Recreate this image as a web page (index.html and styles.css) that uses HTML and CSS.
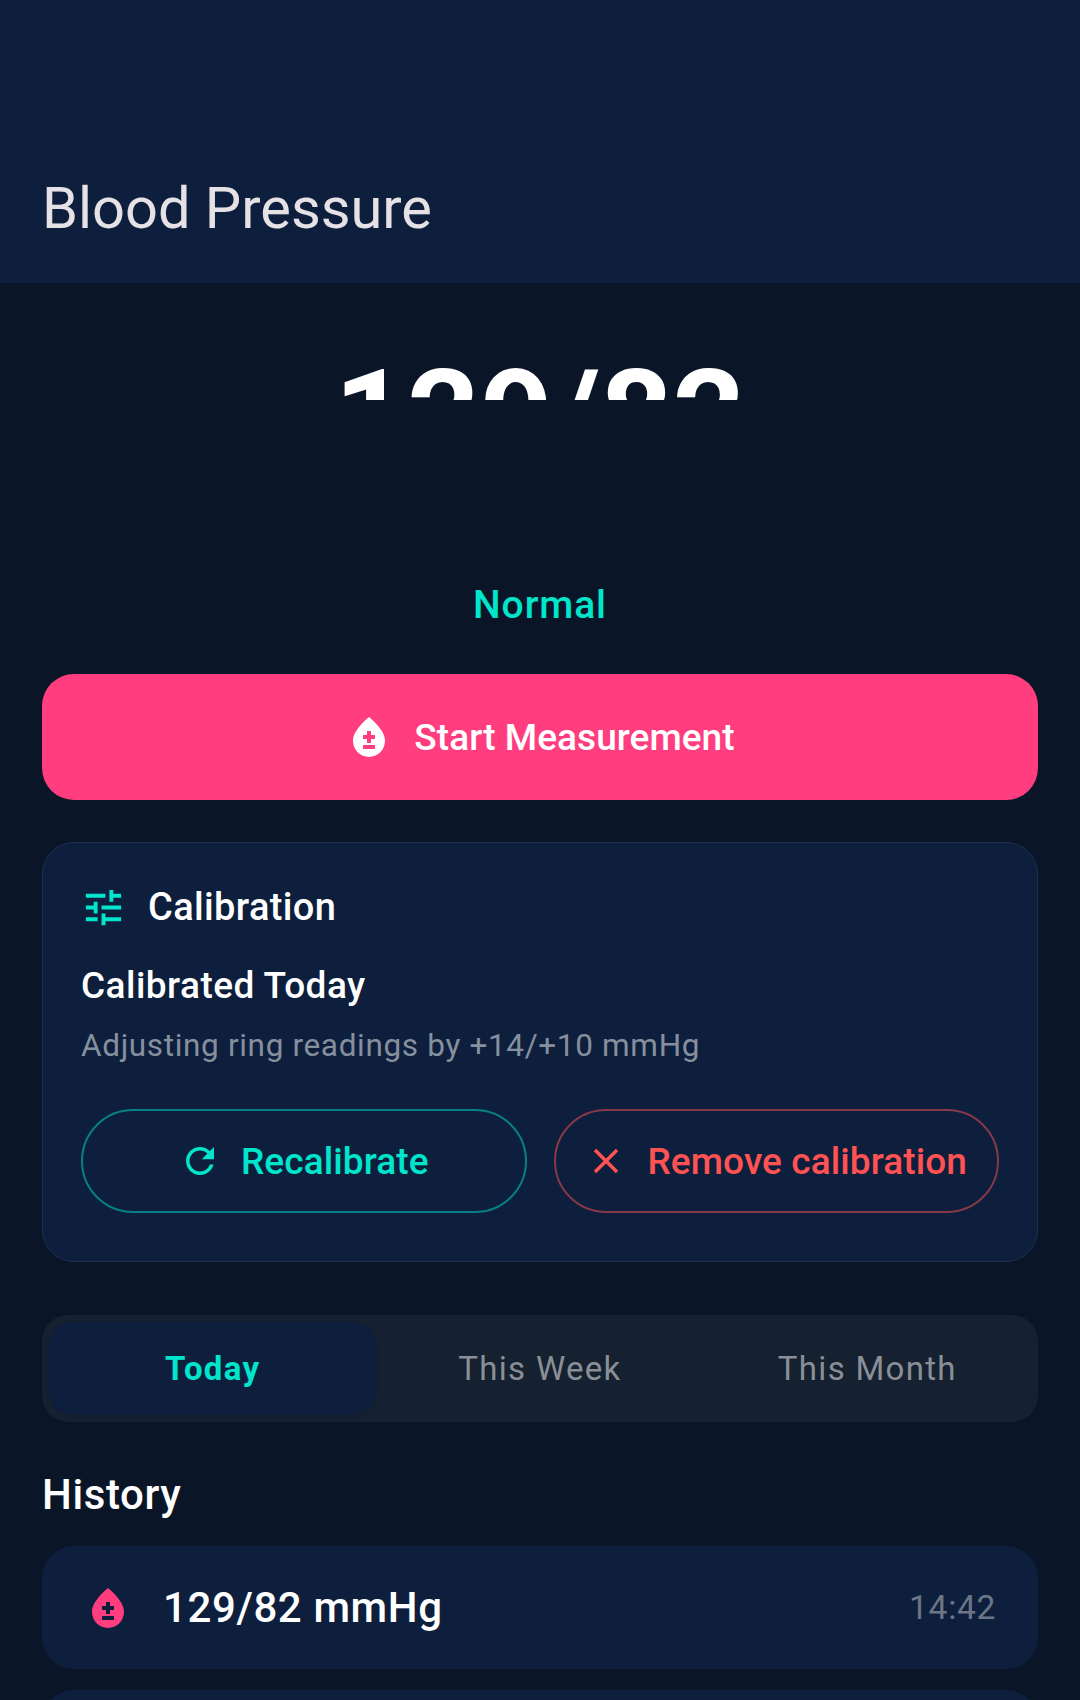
FILE: index.html
```html
<!DOCTYPE html>
<html lang="en">

<head>
    <title>Blood Pressure</title>
    <link rel="stylesheet" href="styles.css">
</head>

<body>
    <div class="screen">
        <header class="app-bar">
            <h1>Blood Pressure</h1>
        </header>

        <main class="content">
            <div class="reading">
                <div class="reading-clip"><span>129/82</span></div>
                <div class="status">Normal</div>
            </div>

            <button class="start-btn">
                <svg class="icon-start" viewBox="0 0 24 24"><path d="M12 2C6.67 6.55 4 10.48 4 13.8 4 18.78 7.8 22 12 22s8-3.22 8-8.2C20 10.48 17.33 6.55 12 2zm3 16H9v-2h6v2zm0-5h-2v2h-2v-2H9v-2h2V9h2v2h2v2z"/></svg>
                <span>Start Measurement</span>
            </button>

            <section class="calibration">
                <div class="cal-head">
                    <svg class="icon-tune" viewBox="0 0 24 24"><path d="M3 17v2h6v-2H3zM3 5v2h10V5H3zm10 16v-2h8v-2h-8v-2h-2v6h2zM7 9v2H3v2h4v2h2V9H7zm14 4v-2H11v2h10zm-6-4h2V7h4V5h-4V3h-2v6z"/></svg>
                    <h2>Calibration</h2>
                </div>
                <div class="cal-title">Calibrated Today</div>
                <div class="cal-note">Adjusting ring readings by +14/+10 mmHg</div>
                <div class="cal-actions">
                    <button class="pill pill-teal">
                        <svg viewBox="0 0 24 24"><path d="M17.65 6.35C16.2 4.9 14.21 4 12 4c-4.42 0-7.99 3.58-7.99 8s3.57 8 7.99 8c3.73 0 6.84-2.55 7.73-6h-2.08c-.82 2.33-3.04 4-5.65 4-3.31 0-6-2.69-6-6s2.69-6 6-6c1.66 0 3.14.69 4.22 1.78L13 11h7V4l-2.35 2.35z"/></svg>
                        <span>Recalibrate</span>
                    </button>
                    <button class="pill pill-red">
                        <svg viewBox="0 0 24 24"><path d="M19 6.41L17.59 5 12 10.59 6.41 5 5 6.41 10.59 12 5 17.59 6.41 19 12 13.41 17.59 19 19 17.59 13.41 12z"/></svg>
                        <span>Remove calibration</span>
                    </button>
                </div>
            </section>

            <div class="tabs">
                <div class="tab active">Today</div>
                <div class="tab">This Week</div>
                <div class="tab">This Month</div>
            </div>

            <h2 class="history-title">History</h2>

            <div class="history-row">
                <svg class="icon-drop" viewBox="0 0 24 24"><path d="M12 2C6.67 6.55 4 10.48 4 13.8 4 18.78 7.8 22 12 22s8-3.22 8-8.2C20 10.48 17.33 6.55 12 2zm3 16H9v-2h6v2zm0-5h-2v2h-2v-2H9v-2h2V9h2v2h2v2z"/></svg>
                <span class="history-value">129/82 mmHg</span>
                <span class="history-time">14:42</span>
            </div>
            <div class="history-row"></div>
        </main>
    </div>
</body>

</html>
```

FILE: styles.css
```css
* {
    box-sizing: border-box;
}

body {
    margin: 0;
    background-color: #0a1628;
    font-family: Roboto, "Liberation Sans", sans-serif;
    color: #ffffff;
}

.screen {
    height: 1700px;
    overflow: hidden;
}

/* top bar */
.app-bar {
    height: 283px;
    background-color: #0d1f3c;
    padding: 0 42px;
    display: flex;
    align-items: flex-end;
}

.app-bar h1 {
    margin: 0 0 37px;
    font-size: 57.75px;
    line-height: 76px;
    font-weight: 400;
    color: #e6e1e5;
}

.content {
    padding: 0 42px;
}

/* big number, the box cuts it off like the app does */
.reading {
    text-align: center;
}

.reading-clip {
    height: 58px;
    margin-top: 59px;
    overflow: hidden;
    font-size: 127px;
    line-height: 148px;
    font-weight: 700;
    white-space: nowrap;
}

.status {
    margin-top: 180px;
    font-size: 39px;
    line-height: 50px;
    font-weight: 500;
    letter-spacing: 0.9px;
    color: #00e5cc;
}

.start-btn {
    display: flex;
    align-items: center;
    justify-content: center;
    gap: 21px;
    width: 100%;
    height: 126px;
    margin-top: 44px;
    border: 0;
    border-radius: 32px;
    background-color: #ff3d7f;
    color: #ffffff;
    font-family: inherit;
    font-size: 37px;
    font-weight: 500;
    letter-spacing: 0.05px;
}

.icon-start {
    width: 48px;
    height: 48px;
    fill: #ffffff;
}

/* calibration card */
.calibration {
    height: 420px;
    margin-top: 42px;
    padding: 40px 38px 0;
    border: 1px solid #1c3050;
    border-radius: 32px;
    background-color: #0d1f3c;
}

.cal-head {
    display: flex;
    align-items: center;
    gap: 21px;
}

.icon-tune {
    width: 47px;
    height: 47px;
    fill: #00e5cc;
    margin-left: -1px;
}

.cal-head h2 {
    margin: 0;
    font-size: 38px;
    line-height: 48px;
    font-weight: 500;
    letter-spacing: 0.35px;
}

.cal-title {
    margin-top: 30px;
    font-size: 37px;
    line-height: 50px;
    font-weight: 500;
    letter-spacing: 0.47px;
}

.cal-note {
    margin-top: 12px;
    font-size: 31.5px;
    line-height: 46px;
    letter-spacing: 0.66px;
    color: #868f9e;
}

.cal-actions {
    display: flex;
    gap: 27px;
    margin-top: 40px;
}

.pill {
    flex: 1;
    display: flex;
    align-items: center;
    justify-content: center;
    gap: 20px;
    height: 104px;
    border-radius: 52px;
    border: 2px solid;
    background: none;
    font-family: inherit;
    font-size: 37px;
    font-weight: 500;
    letter-spacing: 0.1px;
    white-space: nowrap;
    padding: 0;
}

.pill svg {
    width: 42px;
    height: 42px;
    fill: currentColor;
}

.pill-teal {
    color: #00e5cc;
    border-color: #078085;
}

.pill-red {
    color: #ff5252;
    border-color: #863947;
}

/* period tabs */
.tabs {
    display: flex;
    height: 107px;
    margin-top: 53px;
    padding: 7px;
    border-radius: 26px;
    background-color: #152030;
}

.tab {
    flex: 1;
    display: flex;
    align-items: center;
    justify-content: center;
    border-radius: 24px;
    font-size: 33px;
    letter-spacing: 1.3px;
    color: #8a8f97;
}

.tab.active {
    background-color: #0d1f3c;
    color: #00e5cc;
    font-weight: 700;
    box-shadow: 0 1px 3px rgba(0, 0, 0, 0.12);
}

/* history list */
.history-title {
    margin: 45px 0 0;
    font-size: 42px;
    line-height: 56px;
    font-weight: 500;
    letter-spacing: 0.6px;
}

.history-row {
    display: flex;
    align-items: center;
    height: 123px;
    margin-top: 21px;
    padding: 0 42px 0 42px;
    border-radius: 32px;
    background-color: #0d1f3c;
}

.history-title + .history-row {
    margin-top: 23px;
}

.icon-drop {
    width: 48px;
    height: 48px;
    fill: #ff3d7f;
}

.history-value {
    margin-left: 31px;
    font-size: 42px;
    font-weight: 500;
    letter-spacing: 0.6px;
}

.history-time {
    margin-left: auto;
    font-size: 33.6px;
    letter-spacing: 0.66px;
    color: #6d7686;
}
```
